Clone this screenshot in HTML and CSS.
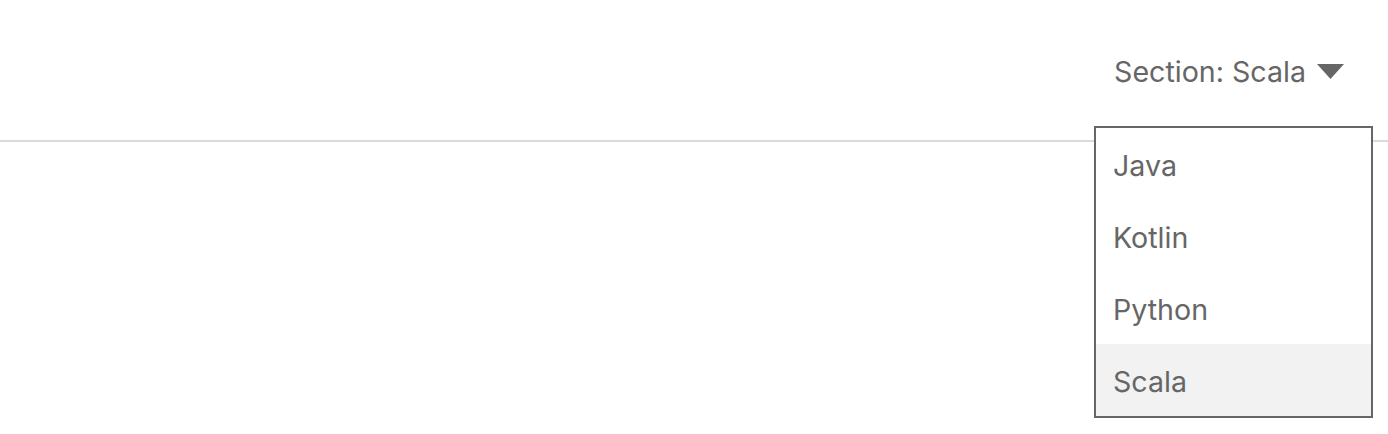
FILE: index.html
```html
<!DOCTYPE html>
<html>
<head>
<meta charset="utf-8">
<link rel="stylesheet" href="styles.css">
</head>
<body>
<div class="page">
  <header class="topbar">
    <div class="section-toggle">
      <span class="section-label">Section: Scala</span>
      <svg class="caret" width="27" height="15" viewBox="0 0 27 15"><polygon points="0,0 27,0 13.5,15" fill="#666"/></svg>
    </div>
  </header>
  <ul class="menu">
    <li class="menu-item">Java</li>
    <li class="menu-item">Kotlin</li>
    <li class="menu-item">Python</li>
    <li class="menu-item selected">Scala</li>
  </ul>
</div>
</body>
</html>
```
FILE: styles.css
```css
* { box-sizing: border-box; }
html, body { margin: 0; padding: 0; background: #fff; }
body { font-family: Inter, "Noto Sans", sans-serif; color: #666; }
.page { position: relative; width: 1388px; height: 434px; overflow: hidden; }
.topbar {
  height: 142px;
  border-bottom: 2px solid #dadada;
  display: flex;
  justify-content: flex-end;
  align-items: center;
  padding: 4px 44px 0 0;
}
.section-toggle { display: flex; align-items: center; gap: 11px; }
.section-label { font-size: 28.6px; line-height: 34px; }
.caret { display: block; margin-top: -2px; }
.menu {
  position: absolute;
  top: 126px;
  right: 15px;
  width: 279px;
  margin: 0;
  padding: 0;
  list-style: none;
  border: 2px solid #666;
  background: #fff;
}
.menu-item {
  height: 72px;
  display: flex;
  align-items: center;
  padding-left: 17px;
  padding-top: 2px;
  font-size: 28.6px;
}
.menu-item.selected { background: #f2f2f2; }
```
